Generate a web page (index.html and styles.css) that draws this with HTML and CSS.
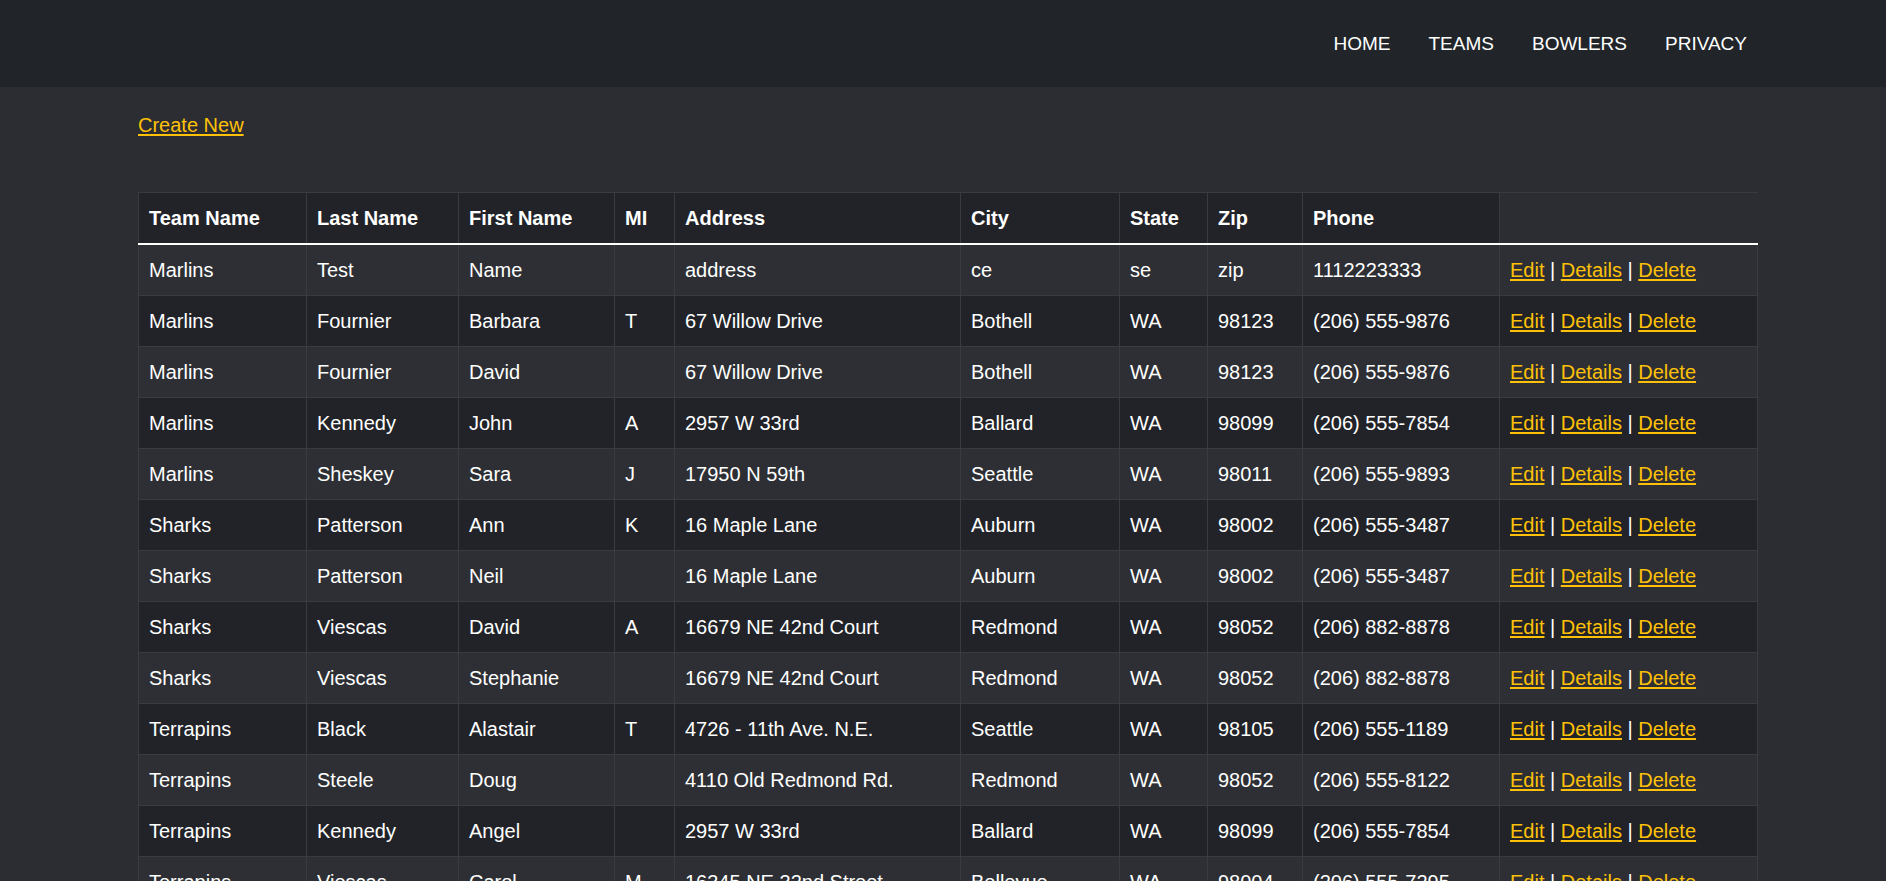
FILE: index.html
```html
<!DOCTYPE html>
<html lang="en">
<head>
<meta charset="utf-8">
<title>Bowlers</title>
<link rel="stylesheet" href="styles.css">
</head>
<body>
<header class="navbar">
  <nav class="nav">
    <a class="nav-link" href="#">HOME</a>
    <a class="nav-link" href="#">TEAMS</a>
    <a class="nav-link" href="#">BOWLERS</a>
    <a class="nav-link" href="#">PRIVACY</a>
  </nav>
</header>
<main class="container">
  <p class="create"><a href="#">Create New</a></p>
  <table class="table">
    <colgroup>
      <col class="c-team"><col class="c-last"><col class="c-first"><col class="c-mi"><col class="c-addr">
      <col class="c-city"><col class="c-state"><col class="c-zip"><col class="c-phone"><col class="c-act">
    </colgroup>
    <thead>
      <tr><th>Team Name</th><th>Last Name</th><th>First Name</th><th>MI</th><th>Address</th><th>City</th><th>State</th><th>Zip</th><th>Phone</th><th class="blank"></th></tr>
    </thead>
    <tbody>
      <tr><td>Marlins</td><td>Test</td><td>Name</td><td></td><td>address</td><td>ce</td><td>se</td><td>zip</td><td>1112223333</td><td><a href="#">Edit</a> | <a href="#">Details</a> | <a href="#">Delete</a></td></tr>
      <tr><td>Marlins</td><td>Fournier</td><td>Barbara</td><td>T</td><td>67 Willow Drive</td><td>Bothell</td><td>WA</td><td>98123</td><td>(206) 555-9876</td><td><a href="#">Edit</a> | <a href="#">Details</a> | <a href="#">Delete</a></td></tr>
      <tr><td>Marlins</td><td>Fournier</td><td>David</td><td></td><td>67 Willow Drive</td><td>Bothell</td><td>WA</td><td>98123</td><td>(206) 555-9876</td><td><a href="#">Edit</a> | <a href="#">Details</a> | <a href="#">Delete</a></td></tr>
      <tr><td>Marlins</td><td>Kennedy</td><td>John</td><td>A</td><td>2957 W 33rd</td><td>Ballard</td><td>WA</td><td>98099</td><td>(206) 555-7854</td><td><a href="#">Edit</a> | <a href="#">Details</a> | <a href="#">Delete</a></td></tr>
      <tr><td>Marlins</td><td>Sheskey</td><td>Sara</td><td>J</td><td>17950 N 59th</td><td>Seattle</td><td>WA</td><td>98011</td><td>(206) 555-9893</td><td><a href="#">Edit</a> | <a href="#">Details</a> | <a href="#">Delete</a></td></tr>
      <tr><td>Sharks</td><td>Patterson</td><td>Ann</td><td>K</td><td>16 Maple Lane</td><td>Auburn</td><td>WA</td><td>98002</td><td>(206) 555-3487</td><td><a href="#">Edit</a> | <a href="#">Details</a> | <a href="#">Delete</a></td></tr>
      <tr><td>Sharks</td><td>Patterson</td><td>Neil</td><td></td><td>16 Maple Lane</td><td>Auburn</td><td>WA</td><td>98002</td><td>(206) 555-3487</td><td><a href="#">Edit</a> | <a href="#">Details</a> | <a href="#">Delete</a></td></tr>
      <tr><td>Sharks</td><td>Viescas</td><td>David</td><td>A</td><td>16679 NE 42nd Court</td><td>Redmond</td><td>WA</td><td>98052</td><td>(206) 882-8878</td><td><a href="#">Edit</a> | <a href="#">Details</a> | <a href="#">Delete</a></td></tr>
      <tr><td>Sharks</td><td>Viescas</td><td>Stephanie</td><td></td><td>16679 NE 42nd Court</td><td>Redmond</td><td>WA</td><td>98052</td><td>(206) 882-8878</td><td><a href="#">Edit</a> | <a href="#">Details</a> | <a href="#">Delete</a></td></tr>
      <tr><td>Terrapins</td><td>Black</td><td>Alastair</td><td>T</td><td>4726 - 11th Ave. N.E.</td><td>Seattle</td><td>WA</td><td>98105</td><td>(206) 555-1189</td><td><a href="#">Edit</a> | <a href="#">Details</a> | <a href="#">Delete</a></td></tr>
      <tr><td>Terrapins</td><td>Steele</td><td>Doug</td><td></td><td>4110 Old Redmond Rd.</td><td>Redmond</td><td>WA</td><td>98052</td><td>(206) 555-8122</td><td><a href="#">Edit</a> | <a href="#">Details</a> | <a href="#">Delete</a></td></tr>
      <tr><td>Terrapins</td><td>Kennedy</td><td>Angel</td><td></td><td>2957 W 33rd</td><td>Ballard</td><td>WA</td><td>98099</td><td>(206) 555-7854</td><td><a href="#">Edit</a> | <a href="#">Details</a> | <a href="#">Delete</a></td></tr>
      <tr><td>Terrapins</td><td>Viescas</td><td>Carol</td><td>M</td><td>16345 NE 32nd Street</td><td>Bellevue</td><td>WA</td><td>98004</td><td>(206) 555-7295</td><td><a href="#">Edit</a> | <a href="#">Details</a> | <a href="#">Delete</a></td></tr>
      <tr><td>Terrapins</td><td>Viescas</td><td>Michael</td><td></td><td>16345 NE 32nd Street</td><td>Bellevue</td><td>WA</td><td>98004</td><td>(206) 555-7295</td><td><a href="#">Edit</a> | <a href="#">Details</a> | <a href="#">Delete</a></td></tr>
    </tbody>
  </table>
</main>
</body>
</html>
```
FILE: styles.css
```css
html, body {
  margin: 0;
  padding: 0;
}
body {
  background: #2c2d32;
  color: #ffffff;
  font-family: "Liberation Sans", Arial, sans-serif;
  font-size: 20px;
  line-height: 30px;
}
.navbar {
  height: 87px;
  background: #212529;
  display: flex;
  justify-content: flex-end;
  align-items: center;
  padding-right: 139px;
}
.nav {
  display: flex;
  gap: 38px;
}
.nav-link {
  color: #ffffff;
  text-decoration: none;
  font-size: 19px;
  line-height: 30px;
}
.container {
  width: 1620px;
  margin-left: 138px;
}
.create {
  margin: 23px 0 52px 0;
}
a {
  color: #ffc107;
  text-decoration: underline;
  text-underline-offset: 2px;
}
.table {
  width: 1620px;
  table-layout: fixed;
  border-collapse: collapse;
}
.c-team { width: 168px; }
.c-last { width: 152px; }
.c-first { width: 156px; }
.c-mi { width: 60px; }
.c-addr { width: 286px; }
.c-city { width: 159px; }
.c-state { width: 88px; }
.c-zip { width: 95px; }
.c-phone { width: 197px; }
.c-act { width: 258px; }
.table th,
.table td {
  padding: 10px 10px;
  text-align: left;
  border: 1px solid #393b40;
  white-space: nowrap;
  overflow: hidden;
}
.table th {
  background: #212328;
  font-weight: bold;
  border-bottom: 2px solid #ffffff;
}
.table th.blank {
  background: transparent;
  border-right: none;
}
.table tbody tr:nth-child(odd) td {
  background: #2d2f34;
}
.table tbody tr:nth-child(even) td {
  background: #212328;
}
```
